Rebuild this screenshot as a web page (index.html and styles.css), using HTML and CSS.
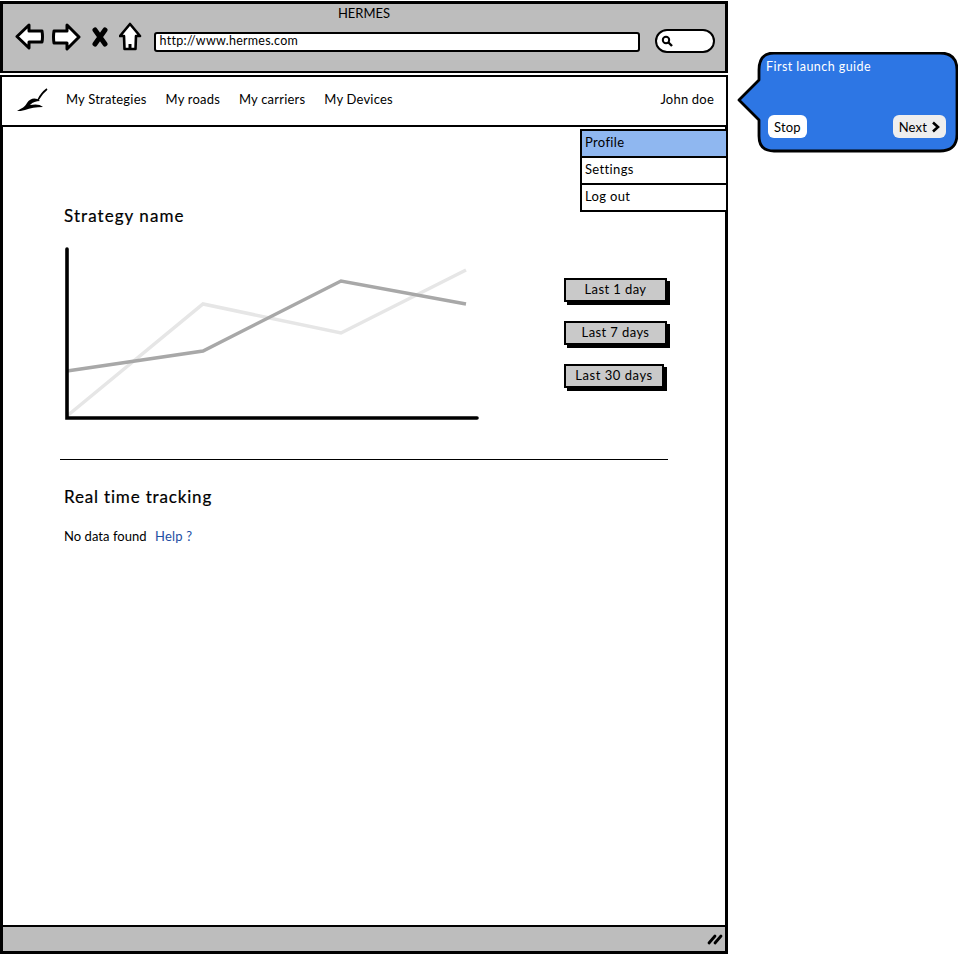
FILE: index.html
```html
<!DOCTYPE html>
<html lang="en">
<head>
<meta charset="utf-8">
<title>HERMES</title>
<link rel="stylesheet" href="styles.css">
</head>
<body>
<div class="window">
  <header class="chrome">
    <div class="chrome-title">HERMES</div>
    <div class="toolbar">
      <div class="tool-icons">
        <svg class="icon" width="30" height="28" viewBox="0 0 30 28"><path d="M14 2 L2 13.5 L14 25 L14 19 L27 19 Q28 14 27 8 L14 8 Z" fill="#fff" stroke="#000" stroke-width="3" stroke-linejoin="round"/></svg>
        <svg class="icon" width="30" height="28" viewBox="0 0 30 28"><path d="M16 2 L28 14 L16 26 L16 20 L3 20 Q2 14 3 8 L16 8 Z" fill="#fff" stroke="#000" stroke-width="3" stroke-linejoin="round"/></svg>
        <svg class="icon icon-x" width="18" height="22" viewBox="0 0 18 22"><path d="M4 4 L14 18 M14 4 L4 18" fill="none" stroke="#000" stroke-width="5" stroke-linecap="round"/></svg>
        <svg class="icon" width="24" height="30" viewBox="0 0 24 30"><path d="M11 2 L21 14 L17 14 L16.5 27 L5.5 27 L5 14 L1 14 Z" fill="#fff" stroke="#000" stroke-width="2.6" stroke-linejoin="round"/><path d="M11 27 V22" stroke="#000" stroke-width="3"/></svg>
      </div>
      <div class="url">http://www.hermes.com</div>
      <div class="search">
        <svg width="12" height="12" viewBox="0 0 12 12"><circle cx="5" cy="5" r="3.2" fill="none" stroke="#000" stroke-width="2"/><path d="M7.5 7.5 L11 11" stroke="#000" stroke-width="2.4"/></svg>
      </div>
    </div>
  </header>
  <nav class="nav">
    <svg class="logo" width="32" height="26" viewBox="0 0 32 26"><path d="M1 23 C6 20 9 19 11 15 C14 10 20 9 24 13 C20 13 17 14 14 17 C19 16 24 16 27 19 C20 19 14 20 9 22 C6 23 3 23 1 23 Z" fill="#000"/><path d="M22 12 C24 8 27 4 31 1" fill="none" stroke="#000" stroke-width="1.6"/></svg>
    <a class="nav-link">My Strategies</a>
    <a class="nav-link">My roads</a>
    <a class="nav-link">My carriers</a>
    <a class="nav-link">My Devices</a>
    <span class="user">John doe</span>
  </nav>
  <main class="main">
    <h2 class="title">Strategy name</h2>
    <div class="chart-row">
      <svg class="chart" width="416" height="176" viewBox="0 0 416 176">
        <polyline points="3,170 139,58 277,87 402,24" fill="none" stroke="#e6e6e6" stroke-width="3.5"/>
        <polyline points="3,125 139,105 277,35 402,58" fill="none" stroke="#a8a8a8" stroke-width="3.5"/>
        <path d="M3 3 V172 H413" fill="none" stroke="#000" stroke-width="3.6" stroke-linecap="round"/>
      </svg>
      <div class="ranges">
        <button class="range">Last 1 day</button>
        <button class="range">Last 7 days</button>
        <button class="range narrow">Last 30 days</button>
      </div>
    </div>
    <hr class="divider">
    <h2 class="title second">Real time tracking</h2>
    <p class="empty">No data found <a class="help">Help ?</a></p>
  </main>
  <footer class="status">
    <svg width="16" height="12" viewBox="0 0 16 12"><path d="M2 10 L8 3 M8 10 L14 3" stroke="#000" stroke-width="2.8" stroke-linecap="round"/></svg>
  </footer>
</div>
<ul class="menu">
  <li class="menu-item active">Profile</li>
  <li class="menu-item">Settings</li>
  <li class="menu-item">Log out</li>
</ul>
<aside class="guide">
  <svg class="guide-shape" width="222" height="102" viewBox="0 0 222 102"><path d="M37 1 H203 Q220 1 220 18 V82 Q220 99 203 99 H37 Q22 99 22 84 V68 L2 48 L22 28 V18 Q22 1 37 1 Z" fill="#2d76e4" stroke="#000" stroke-width="2.8" stroke-linejoin="round"/></svg>
  <div class="guide-title">First launch guide</div>
  <div class="guide-actions">
    <span class="guide-btn">Stop</span>
    <span class="guide-btn next">Next <svg width="9" height="12" viewBox="0 0 9 12"><path d="M2 1.5 L7 6 L2 10.5" fill="none" stroke="#000" stroke-width="2.6"/></svg></span>
  </div>
</aside>
</body>
</html>
```
FILE: styles.css
```css
* { box-sizing: border-box; }
html, body { margin: 0; padding: 0; background: #fff; }
body { width: 958px; height: 954px; position: relative; overflow: hidden; font-family: "Lato", "Noto Sans", sans-serif; color: #000; }

.window { width: 728px; height: 953px; margin-top: 1px; display: flex; flex-direction: column; }

.chrome { height: 72px; background: #bdbdbd; border: 3px solid #000; border-bottom-width: 2px; flex: none; }
.chrome-title { text-align: center; font-size: 13px; line-height: 16px; margin-top: 1px; }
.toolbar { display: flex; align-items: flex-start; padding: 0 10px 0 12px; margin-top: 1px; }
.tool-icons { display: flex; align-items: center; gap: 6px; width: 139px; height: 30px; }
.icon { flex: none; }
.icon-x { margin: 0 4px; }
.url { width: 488px; height: 20px; margin-top: 10px; background: #fff; border: 2px solid #000; border-radius: 3px; font-size: 12.5px; line-height: 13px; padding-left: 4px; letter-spacing: .25px; }
.search { width: 60px; height: 24px; margin: 7px 0 0 15px; background: #fff; border: 2.5px solid #000; border-radius: 12px; padding: 4px 0 0 4px; display: flex; align-items: flex-start; }

.nav { height: 52px; margin-top: 2px; flex: none; display: flex; align-items: center; background: #fff; border: 2px solid #000; padding: 0 12px 4px 14px; font-size: 13px; }
.logo { margin-right: 18px; flex: none; margin-top: 4px; }
.nav-link { margin-right: 19px; letter-spacing: .2px; }
.user { margin-left: auto; letter-spacing: .2px; }

.main { flex: 1; border-left: 3px solid #000; border-right: 3px solid #000; padding: 0 0 0 61px; }
.title { margin: 0; font-size: 17px; font-weight: 400; line-height: 22px; padding-top: 78px; -webkit-text-stroke: .2px #000; letter-spacing: 1.05px; }
.title.second { padding-top: 26px; letter-spacing: .83px; }
.chart-row { display: flex; margin-top: 19px; }
.chart { display: block; flex: none; }
.ranges { display: flex; flex-direction: column; align-items: flex-start; gap: 19px; margin: 32px 0 0 84px; }
.range { width: 103px; height: 24px; padding: 0 0 2px; background: #c9c9c9; border: 2px solid #000; box-shadow: 3px 3px 0 #000; border-radius: 0; font: 13px/18px "Lato", "Noto Sans", sans-serif; letter-spacing: .4px; color: #000; }
.range.narrow { width: 100px; letter-spacing: .55px; }
.divider { width: 608px; height: 1px; margin: 37px 0 0 -4px; background: #000; border: 0; }
.empty { margin: 19px 0 0; font-size: 13px; line-height: 18px; letter-spacing: .05px; }
.help { color: #1d4ea3; margin-left: 5px; letter-spacing: .2px; }

.status { height: 29px; flex: none; background: #bdbdbd; border: 3px solid #000; border-width: 2px 3px 3px; display: flex; justify-content: flex-end; align-items: center; padding-right: 2px; }

.menu { position: absolute; left: 580px; top: 129px; width: 148px; margin: 0; padding: 0; list-style: none; border: 2px solid #000; border-bottom-width: 1px; background: #000; display: flex; flex-direction: column; gap: 1px; }
.menu-item { height: 25px; margin-bottom: 1px; background: #fff; font-size: 13px; line-height: 22px; padding-left: 3px; letter-spacing: .35px; }
.menu-item.active { background: #8fb7f0; }

.guide { position: absolute; left: 737px; top: 52px; width: 222px; height: 102px; padding: 7px 12px 0 29px; }
.guide-shape { position: absolute; left: 0; top: 0; }
.guide-title { position: relative; color: #fff; font-size: 12.5px; line-height: 16px; letter-spacing: .45px; }
.guide-actions { position: relative; display: flex; justify-content: space-between; margin-top: 40px; padding: 0 1px 0 2px; }
.guide-btn { height: 23px; padding: 0 6px; background: #fff; border-radius: 6px; font-size: 13px; line-height: 22px; letter-spacing: .15px; display: flex; align-items: center; gap: 4px; }
.guide-btn.next { background: #eeeeee; }
```
